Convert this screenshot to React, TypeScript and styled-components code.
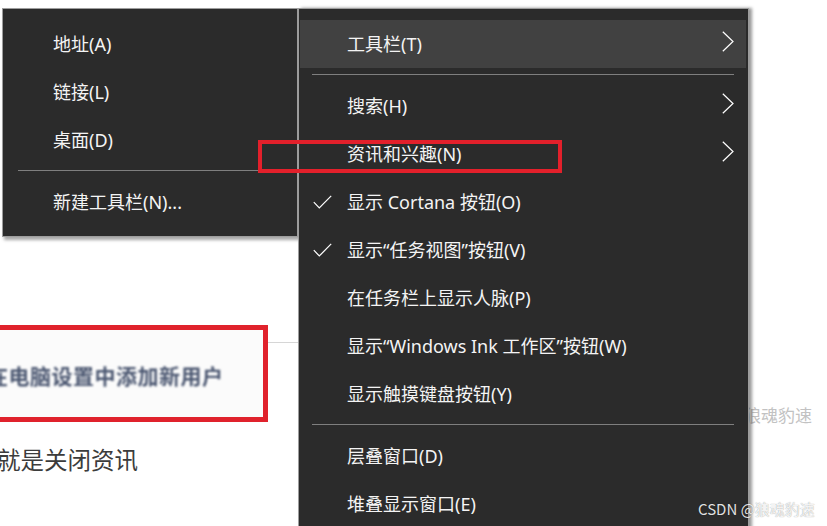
import React from "react";
import styled, { createGlobalStyle } from "styled-components";

const Global = createGlobalStyle`
  html, body { margin: 0; padding: 0; background: #ffffff; overflow: hidden; }
  * { box-sizing: border-box; }
`;

const FONT = `"Noto Sans CJK SC", "Noto Sans", sans-serif`;
const MENU_FONT = `"Noto Sans", "Noto Sans CJK SC", sans-serif`;

const Page = styled.div`
  position: relative;
  display: flex;
  align-items: flex-start;
  width: 827px;
  height: 526px;
  overflow: hidden;
  background: #ffffff;
  font-family: ${FONT};
`;

const LeftCol = styled.div`
  flex: none;
  width: 298px;
  padding-top: 8px;
  display: flex;
  flex-direction: column;
`;

const MenuBox = styled.div<{ $width: number; $open?: boolean }>`
  width: ${(p) => p.$width}px;
  background: #2b2b2b;
  border: 1px solid #9d9d9d;
  ${(p) => (p.$open ? "border-bottom: none;" : "")}
  padding: 11px 2px 10px 1px;
  display: flex;
  flex-direction: column;
  box-shadow: 2px 3px 3px rgba(0, 0, 0, 0.35);
  font-family: ${MENU_FONT};
`;

const SubMenu = styled(MenuBox)`
  margin-left: 2px;
  position: relative;
  z-index: 1;
`;

const MainMenu = styled(MenuBox)`
  flex: none;
  margin-top: 8px;
  position: relative;
  z-index: 2;
  box-shadow: 3px 0 3px rgba(0, 0, 0, 0.4);
`;

const Item = styled.div<{ $hover?: boolean; $gutter: number }>`
  height: 48px;
  display: grid;
  grid-template-columns: ${(p) => p.$gutter}px 1fr 24px;
  align-items: center;
  background: ${(p) => (p.$hover ? "#414141" : "transparent")};
  color: #f4f4f4;
  font-size: 18px;
  white-space: nowrap;
`;

const CheckCell = styled.div`
  display: flex;
  align-items: center;
  padding-left: 13px;
`;

const Label = styled.span`
  line-height: 48px;
`;

const Sep = styled.div<{ $left: number; $right: number }>`
  height: 14px;
  padding-top: 6px;
  padding-left: ${(p) => p.$left}px;
  padding-right: ${(p) => p.$right}px;
  &::after {
    content: "";
    display: block;
    height: 1px;
    background: #7f7f7f;
  }
`;

const Backdrop = styled.div`
  margin-top: 88px;
  display: flex;
  flex-direction: column;
`;

const ShotRow = styled.div`
  display: flex;
  align-items: flex-start;
`;

const RedBox = styled.div`
  width: 268px;
  height: 97px;
  border: 5px solid #e0222c;
  border-left: none;
  background: #fbfbfb;
  display: flex;
  align-items: center;
  overflow: hidden;
`;

const BlurText = styled.span`
  margin-left: -13px;
  margin-top: 2px;
  font-size: 21px;
  font-weight: 700;
  color: #4a5670;
  filter: blur(1.1px);
  white-space: nowrap;
  letter-spacing: 0.5px;
`;

const ShotLine = styled.div`
  flex: 1;
  height: 1px;
  margin-top: 17px;
  background: #d6d6d6;
`;

const CloseText = styled.div`
  margin-top: 22px;
  margin-left: -3px;
  font-size: 23.5px;
  line-height: 30px;
  color: #3c3c3c;
  white-space: nowrap;
`;

const RightCol = styled.div`
  flex: 1;
  padding-top: 402px;
  overflow: hidden;
`;

const SideMark = styled.div`
  margin-left: -5px;
  font-size: 17px;
  color: #c2c2c2;
  white-space: nowrap;
`;

const Annotation = styled.div`
  position: absolute;
  left: 258px;
  top: 140px;
  width: 304px;
  height: 33px;
  border: 4px solid #e3202b;
  z-index: 3;
`;

const Csdn = styled.div`
  position: absolute;
  left: 698px;
  top: 498px;
  z-index: 4;
  font-size: 15px;
  color: rgba(255, 255, 255, 0.88);
  text-shadow: 0 0 1px rgba(0, 0, 0, 0.45);
  white-space: nowrap;
`;

const Chevron = () => (
  <svg width="12" height="21" viewBox="0 0 12 21">
    <polyline points="0.8,0.8 11,10.5 0.8,20.2" fill="none" stroke="#ffffff" strokeWidth="1.2" />
  </svg>
);

const Check = () => (
  <svg width="19" height="14" viewBox="0 0 19 14">
    <polyline points="0.8,7.2 6.3,13 18.2,0.8" fill="none" stroke="#ffffff" strokeWidth="1.2" />
  </svg>
);

type Entry =
  | { sep: true }
  | { label: string; check?: boolean; sub?: boolean; hover?: boolean };

const subItems: Entry[] = [
  { label: "地址(A)" },
  { label: "链接(L)" },
  { label: "桌面(D)" },
  { sep: true },
  { label: "新建工具栏(N)..." },
];

const mainItems: Entry[] = [
  { label: "工具栏(T)", sub: true, hover: true },
  { sep: true },
  { label: "搜索(H)", sub: true },
  { label: "资讯和兴趣(N)", sub: true },
  { label: "显示 Cortana 按钮(O)", check: true },
  { label: "显示“任务视图”按钮(V)", check: true },
  { label: "在任务栏上显示人脉(P)" },
  { label: "显示“Windows Ink 工作区”按钮(W)" },
  { label: "显示触摸键盘按钮(Y)" },
  { sep: true },
  { label: "层叠窗口(D)" },
  { label: "堆叠显示窗口(E)" },
];

const renderItems = (items: Entry[], gutter: number, sepL: number, sepR: number) =>
  items.map((it, i) =>
    "sep" in it ? (
      <Sep key={i} $left={sepL} $right={sepR} />
    ) : (
      <Item key={i} $hover={it.hover} $gutter={gutter}>
        <CheckCell>{it.check ? <Check /> : null}</CheckCell>
        <Label>{it.label}</Label>
        <div>{it.sub ? <Chevron /> : null}</div>
      </Item>
    )
  );

export default function App() {
  return (
    <>
      <Global />
      <Page>
        <LeftCol>
          <SubMenu $width={296}>{renderItems(subItems, 49, 14, 0)}</SubMenu>
          <Backdrop>
            <ShotRow>
              <RedBox>
                <BlurText>在电脑设置中添加新用户</BlurText>
              </RedBox>
              <ShotLine />
            </ShotRow>
            <CloseText>就是关闭资讯</CloseText>
          </Backdrop>
        </LeftCol>
        <MainMenu $width={451} $open>
          {renderItems(mainItems, 47, 12, 12)}
        </MainMenu>
        <RightCol>
          <SideMark>狼魂豹速</SideMark>
        </RightCol>
        <Annotation />
        <Csdn>CSDN @狼魂豹速</Csdn>
      </Page>
    </>
  );
}
